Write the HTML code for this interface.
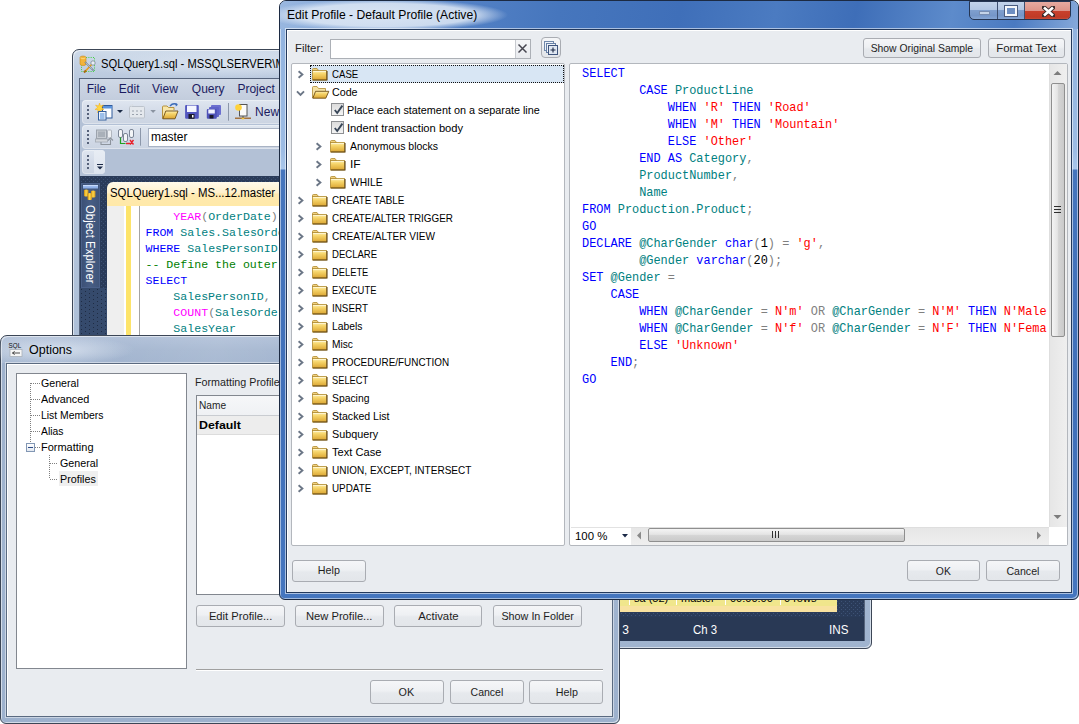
<!DOCTYPE html>
<html><head><meta charset="utf-8"><style>*{margin:0;padding:0;box-sizing:border-box}
html,body{width:1079px;height:724px;overflow:hidden;background:#fff;font-family:"Liberation Sans",sans-serif;font-size:11px;color:#000;position:relative}
.a{position:absolute}
.t{position:absolute;white-space:pre;transform-origin:0 0}
.btn{position:absolute;border:1px solid #a9acb2;border-radius:3px;background:linear-gradient(#f5f6f8,#eef0f3 45%,#e6e9ed 55%,#e3e6ea)}
.kw{color:#0000ff}.id{color:#008080}.st{color:#ff0000}.gr{color:#808080}.fn{color:#ff00ff}.cm{color:#008000}
</style></head><body>
<svg width="0" height="0" style="position:absolute"><defs><linearGradient id="fg" x1="0" y1="0" x2="0" y2="1"><stop offset="0" stop-color="#fdf0b8"/><stop offset="0.35" stop-color="#f6d56a"/><stop offset="1" stop-color="#dba532"/></linearGradient></defs></svg>
<div class="a" style="left:72px;top:49px;width:800px;height:600px;border:1px solid #3c4656;border-radius:7px 7px 6px 6px;box-shadow:inset 1px 1px 0 rgba(255,255,255,.55),inset -1px -1px 0 rgba(255,255,255,.55);background:linear-gradient(#cfdbea,#c2d0e3 14px,#bac9de 29px,#aabdd6 60%,#a0b4cf)"></div>
<div class="a" style="left:73px;top:50px;width:327px;height:28px;background:radial-gradient(ellipse 150px 14px at 150px 14px,rgba(230,237,246,.7),rgba(230,237,246,0))"></div>
<svg class="a" style="left:0;top:0" width="100" height="80"><rect x="81.5" y="57.5" width="13" height="14" fill="none" stroke="#3fd03f" stroke-width="1" stroke-dasharray="1,1.3"/><path d="M80 57.5 Q80 56 83 56 Q86 56 86 57.5 V64 Q86 65.5 83 65.5 Q80 65.5 80 64z" fill="#f2b43a" stroke="#c98a1a" stroke-width=".6"/><path d="M80.5 58 Q83 59.5 85.5 58" fill="none" stroke="#ffe08a" stroke-width=".8"/><path d="M85 71.5 L93 63" stroke="#e8a020" stroke-width="1.8"/><path d="M84 72.5 L86 70.5" stroke="#a86a10" stroke-width="2"/><path d="M85 62 L93.5 70.5" stroke="#6c7c8c" stroke-width="1.6"/><path d="M85.5 62.5 L92.5 69.5" stroke="#dfe8f0" stroke-width=".6"/><circle cx="93" cy="63" r="2.2" fill="#e8eef4" stroke="#7a8694" stroke-width=".8"/></svg>
<div class="t" style="left:100.74px;top:57.52px;font-size:12px;line-height:12px;color:#000;font-weight:normal;font-family:'Liberation Sans';transform:scaleX(0.9320);">SQLQuery1.sql - MSSQLSERVER\MSSQLSERVER2012.master</div>
<div class="a" style="left:0;top:0;width:1079px;height:724px;clip-path:inset(78px 214px 83px 79px)">
<div class="a" style="left:79px;top:78px;width:786px;height:564px;background:#b3c1d6;border:1px solid #56647c"></div>
<div class="a" style="left:80px;top:79px;width:784px;height:21px;background:linear-gradient(#cfd8e6,#c3cddd)"></div>
<div class="t" style="left:86.70px;top:83.12px;font-size:12px;line-height:12px;color:#1b1b60;font-weight:normal;font-family:'Liberation Sans';transform:scaleX(1.0000);">File</div>
<div class="t" style="left:118.80px;top:83.12px;font-size:12px;line-height:12px;color:#1b1b60;font-weight:normal;font-family:'Liberation Sans';transform:scaleX(1.0000);">Edit</div>
<div class="t" style="left:152.00px;top:83.12px;font-size:12px;line-height:12px;color:#1b1b60;font-weight:normal;font-family:'Liberation Sans';transform:scaleX(1.0000);">View</div>
<div class="t" style="left:191.80px;top:83.12px;font-size:12px;line-height:12px;color:#1b1b60;font-weight:normal;font-family:'Liberation Sans';transform:scaleX(1.0000);">Query</div>
<div class="t" style="left:237.40px;top:83.12px;font-size:12px;line-height:12px;color:#1b1b60;font-weight:normal;font-family:'Liberation Sans';transform:scaleX(1.0000);">Project</div>
<div class="a" style="left:82.2px;top:100.3px;width:817.8px;height:23.5px;border-radius:4px;background:linear-gradient(#dfe6f0,#d3dbe8 50%,#cbd4e2);box-shadow:inset 0 0 0 1px rgba(255,255,255,.35)"></div>
<div class="a" style="left:82.2px;top:125.2px;width:817.8px;height:23.5px;border-radius:4px;background:linear-gradient(#dfe6f0,#d3dbe8 50%,#cbd4e2);box-shadow:inset 0 0 0 1px rgba(255,255,255,.35)"></div>
<div class="a" style="left:82.2px;top:150.2px;width:22.6px;height:24px;border-radius:4px;background:linear-gradient(#dfe6f0,#d3dbe8 50%,#cbd4e2);box-shadow:inset 0 0 0 1px rgba(255,255,255,.35)"></div>
<div class="a" style="left:94.4px;top:150.2px;width:10.4px;height:24px;border-radius:0 4px 4px 0;background:linear-gradient(#e8edf4,#dde4ee)"></div>
<div class="a" style="left:87px;top:105px;width:2px;height:15px;background-image:linear-gradient(#56627a 0 2px,transparent 2px);background-size:2px 4px"></div>
<div class="a" style="left:87px;top:130px;width:2px;height:15px;background-image:linear-gradient(#56627a 0 2px,transparent 2px);background-size:2px 4px"></div>
<div class="a" style="left:87px;top:155px;width:2px;height:15px;background-image:linear-gradient(#56627a 0 2px,transparent 2px);background-size:2px 4px"></div>
<svg class="a" style="left:0;top:0" width="300" height="180">
  <rect x="102.5" y="105.5" width="9.5" height="12.5" fill="#fbfdff" stroke="#2f5a9c"/>
  <rect x="103" y="106" width="9" height="2.5" fill="#5b93dc"/>
  <path d="M99.5 103 l1 3 3 -1 -2 2.5 2.5 2 -3 .2 .5 3 -2 -2.2 -2 2.2 .5 -3 -3 -.2 2.5 -2 -2 -2.5 3 1z" fill="#ffd640" stroke="#f0a000" stroke-width=".4"/>
  <rect x="98.5" y="111.5" width="7.5" height="8.5" fill="#eef4fc" stroke="#35609e"/>
  <path d="M100 114 h4.5 M100 116 h4.5 M100 118 h4.5" stroke="#4a8ad8" stroke-width="1"/>
  <path d="M117 110 h6 l-3 3z" fill="#1b2a46"/>
  <rect x="129.5" y="106.5" width="15" height="11.5" rx="1" fill="#e4e8ed" stroke="#bcc3cc"/>
  <path d="M132 111 h2 M136 111 h2 M140 111 h2 M132 114.5 h2 M136 114.5 h2 M140 114.5 h2" stroke="#9aa2ad" stroke-width="1.2"/>
  <path d="M132 104 l1 2 M130 105 l2 1.5" stroke="#d8dde3" stroke-width="1"/>
  <path d="M150.3 110 h5.6 l-2.8 3z" fill="#8a93a0"/>
  <path d="M162.5 118.5 V107 Q162.5 106 163.5 106 H167 L168.5 107.5 H174 V110" fill="#f8e6a8" stroke="#b08a30" stroke-width=".9"/>
  <path d="M162.8 118.8 L165.8 111 H178 L175 118.8 Z" fill="url(#fg)" stroke="#6e4e14" stroke-width=".9"/>
  <path d="M170 106 Q173 102.5 177 104.5" fill="none" stroke="#3a6ab8" stroke-width="1.4"/><path d="M175.5 103 l2.5 1.8 -2.2 1.6z" fill="#3a6ab8"/>
  <rect x="185.1" y="105.1" width="13.7" height="13.7" rx="1" fill="#5357c0"/>
  <rect x="187" y="105.6" width="9.5" height="6.4" fill="#f4f6ff"/>
  <rect x="188.5" y="114" width="6" height="4.8" fill="#1a1a2a"/><rect x="192" y="115" width="1.5" height="2.5" fill="#fff"/>
  <rect x="211" y="105" width="10" height="10" rx="1" fill="#6b6fd0"/>
  <rect x="209" y="107" width="10" height="10" rx="1" fill="#5e62c8"/>
  <rect x="206.8" y="109" width="10" height="9.8" rx="1" fill="#4e52b8"/>
  <rect x="208.3" y="109.5" width="6.5" height="4" fill="#f0f2ff"/><rect x="209.5" y="115" width="4" height="3.5" fill="#1a1a2a"/>
  <rect x="228" y="103" width="1" height="17.7" fill="#8c97aa"/>
  <rect x="239.5" y="104.5" width="7.5" height="11.5" fill="#fbfbfb" stroke="#555"/>
  <circle cx="238.5" cy="107.5" r="3.3" fill="#ffd23a"/>
  <path d="M235 118.2 h16" stroke="#9a5a18" stroke-width="1.2"/><circle cx="243" cy="118.2" r="1.2" fill="#f5c542"/><path d="M243 116 v2" stroke="#555"/>
  <rect x="96.5" y="130" width="10" height="8.5" fill="#c7ccd3" stroke="#9ca3ad"/><rect x="98" y="131.5" width="7" height="5.5" fill="#a9b0b9"/>
  <rect x="95.5" y="139" width="12" height="3" fill="#d2d6dc" stroke="#a4aab3" stroke-width=".8"/>
  <rect x="107.5" y="130" width="4" height="8" rx="1" fill="#eceff3" stroke="#a4aab3" stroke-width=".8"/>
  <path d="M101 142 v2.5 h9.5 v-5" fill="none" stroke="#8d949d" stroke-width="1.1"/><path d="M108 140.5 l2.5 -2.5 2.5 2.5" fill="none" stroke="#8d949d" stroke-width="1.1"/>
  <rect x="118.5" y="129.5" width="4" height="8" rx="1.5" fill="#f4f6f8" stroke="#6f7b8c" stroke-width=".9"/>
  <rect x="123.5" y="133.5" width="4" height="8" rx="1.5" fill="#f4f6f8" stroke="#6f7b8c" stroke-width=".9"/>
  <rect x="129.5" y="129.5" width="4" height="8" rx="1.5" fill="#f4f6f8" stroke="#6f7b8c" stroke-width=".9"/>
  <path d="M120.5 137.5 v6 h5" fill="none" stroke="#21a021" stroke-width="1.2"/>
  <path d="M130 140 l3.5 4.5 M133.5 140 l-3.5 4.5 M126 143.5 h4" stroke="#e8202a" stroke-width="1.4"/>
  <rect x="140" y="128" width="1" height="17.7" fill="#8c97aa"/>
  <rect x="97" y="164" width="6" height="1" fill="#1b2a46"/><path d="M97 166.5 h6 l-3 3z" fill="#1b2a46"/>
</svg>
<div class="t" style="left:255.10px;top:105.72px;font-size:12px;line-height:12px;color:#1b1b60;font-weight:normal;font-family:'Liberation Sans';transform:scaleX(1.0000);">New Query</div>
<div class="a" style="left:147.6px;top:127.5px;width:752.4px;height:19.2px;background:#fff;border:1px solid #a9b3c4"></div>
<div class="t" style="left:151.00px;top:131.42px;font-size:12px;line-height:12px;color:#000;font-weight:normal;font-family:'Liberation Sans';transform:scaleX(0.9947);">master</div>
<svg class="a" style="left:80px;top:176px" width="784" height="465"><defs><pattern id="dk1" width="4" height="4" patternUnits="userSpaceOnUse"><rect width="4" height="4" fill="#2a3b59"/><rect x="1" y="1" width="1" height="1" fill="#3d5275"/><rect x="3" y="3" width="1" height="1" fill="#3d5275"/></pattern><pattern id="dk2" width="8" height="4" patternUnits="userSpaceOnUse"><rect width="8" height="4" fill="#354a6c"/><rect x="1" y="1" width="1" height="1" fill="#1f2c44"/><rect x="5" y="3" width="1" height="1" fill="#1f2c44"/></pattern></defs><rect width="784" height="465" fill="url(#dk1)"/><rect x="0" y="112" width="27" height="297" fill="url(#dk2)"/></svg>
<div class="a" style="left:80.5px;top:183px;width:19px;height:105px;background:linear-gradient(90deg,#3c5177,#475d84 50%,#3f5479);border:1px solid #4a6089"></div>
<svg class="a" style="left:0;top:0" width="110" height="210"><defs><linearGradient id="cyl" x1="0" x2="1"><stop offset="0" stop-color="#c98a10"/><stop offset=".45" stop-color="#ffd84a"/><stop offset="1" stop-color="#d49a20"/></linearGradient></defs><rect x="83" y="185" width="15" height="3.5" fill="#8fb0e8"/><rect x="83" y="185" width="15" height="1.2" fill="#c6dafc"/><path d="M84 190 q2.2 -1.2 4.4 0 v6 q-2.2 1.2 -4.4 0z" fill="url(#cyl)"/><path d="M91 191 q2.2 -1.2 4.4 0 v6 q-2.2 1.2 -4.4 0z" fill="url(#cyl)"/><path d="M87.5 193.5 q2.2 -1.2 4.4 0 v6 q-2.2 1.2 -4.4 0z" fill="url(#cyl)"/></svg>
<div class="t" style="left:95.5px;top:205px;font-size:12px;line-height:12px;color:#fff;transform:rotate(90deg) scaleX(0.95)">Object Explorer</div>
<div class="a" style="left:107px;top:182px;width:757px;height:24px;border-radius:6px 0 0 0;background:linear-gradient(#fffaea,#fff1cc 45%,#ffe9b0 50%,#ffe9a8)"></div>
<div class="t" style="left:110.43px;top:187.22px;font-size:12px;line-height:12px;color:#000;font-weight:normal;font-family:'Liberation Sans';transform:scaleX(0.9487);">SQLQuery1.sql - MS...12.master</div>
<div class="a" style="left:107px;top:206px;width:730px;height:379px;background:#fff"></div>
<div class="a" style="left:107px;top:206px;width:17px;height:379px;background:#efefef"></div>
<div class="a" style="left:126px;top:206px;width:5px;height:379px;background:#fde46a"></div>
<div class="a" style="left:138.5px;top:206px;width:1px;height:379px;background:#a5a5a5"></div>
<div class="a" style="left:145.5px;top:208.5px;font-family:'Liberation Mono';font-size:11.6px;line-height:16px;white-space:pre"><span class="fn">    YEAR</span><span class="gr">(</span><span class="id">OrderDate</span><span class="gr">)</span> <span class="kw">AS</span> <span class="id">SalesYear</span>
<span class="kw">FROM</span> <span class="id">Sales.SalesOrderHeader</span>
<span class="kw">WHERE</span> <span class="id">SalesPersonID</span> <span class="gr">IS NOT NULL</span><span class="gr">)</span>
<span class="cm">-- Define the outer query.</span>
<span class="kw">SELECT</span>
<span class="id">    SalesPersonID</span><span class="gr">,</span>
<span class="fn">    COUNT</span><span class="gr">(</span><span class="id">SalesOrderID</span><span class="gr">)</span> <span class="kw">AS</span>
<span class="id">    SalesYear</span></div>
<div class="a" style="left:107px;top:585px;width:730px;height:27px;background:linear-gradient(#f0e68c 0,#f0e68c 79%,#f8e2a0 79%)"></div>
<div class="a" style="left:628.6px;top:590px;width:1px;height:15px;background:#fff"></div>
<div class="a" style="left:675.8px;top:590px;width:1px;height:15px;background:#fff"></div>
<div class="a" style="left:725px;top:590px;width:1px;height:15px;background:#fff"></div>
<div class="a" style="left:780px;top:590px;width:1px;height:15px;background:#fff"></div>
<div class="t" style="left:634px;top:592.5px;font-size:11px;line-height:11px;color:#000">sa (52)</div>
<div class="t" style="left:681px;top:592.5px;font-size:11px;line-height:11px;color:#000">master</div>
<div class="t" style="left:730px;top:592.5px;font-size:11px;line-height:11px;color:#000">00:00:00</div>
<div class="t" style="left:784px;top:592.5px;font-size:11px;line-height:11px;color:#000">0 rows</div>
<div class="a" style="left:80px;top:617px;width:784px;height:24px;background:#293955"></div>
<div class="t" style="left:622.20px;top:623.72px;font-size:12px;line-height:12px;color:#fff;font-weight:normal;font-family:'Liberation Sans';transform:scaleX(1.0000);">3</div>
<div class="t" style="left:693.43px;top:623.72px;font-size:12px;line-height:12px;color:#fff;font-weight:normal;font-family:'Liberation Sans';transform:scaleX(0.9520);">Ch 3</div>
<div class="t" style="left:829.12px;top:623.72px;font-size:12px;line-height:12px;color:#fff;font-weight:normal;font-family:'Liberation Sans';transform:scaleX(0.9726);">INS</div>
</div>
<div class="a" style="left:0px;top:335px;width:620px;height:389px;border:1px solid #3c4656;border-radius:7px 7px 6px 6px;box-shadow:inset 1px 1px 0 rgba(255,255,255,.55),inset -1px -1px 0 rgba(255,255,255,.55);background:linear-gradient(#b0c0d8,#a4b6d0 14px,#9fb2cd 29px,#a0b4cf 60%,#9db1cd)"></div>
<div class="a" style="left:1px;top:336px;width:618px;height:27px;border-radius:6px 6px 0 0;background:linear-gradient(100deg,rgba(255,255,255,.12) 0,rgba(255,255,255,.03) 20%,rgba(255,255,255,.1) 35%,rgba(255,255,255,0) 55%,rgba(255,255,255,.08) 80%,rgba(255,255,255,0) 100%)"></div>
<div class="a" style="left:0px;top:336px;width:180px;height:27px;background:radial-gradient(ellipse 80px 14px at 55px 14px,rgba(225,233,244,.8),rgba(225,233,244,0))"></div>
<svg class="a" style="left:0;top:330px" width="30" height="30"><text x="8.6" y="18.2" font-family="Liberation Sans" font-size="6.8" fill="#111" textLength="12.6" lengthAdjust="spacingAndGlyphs">SQL</text><rect x="10" y="19.5" width="12" height="7" fill="#f6f6f6" stroke="#a8b0b8" stroke-width=".8"/><path d="M12.5 23 h7.5 M12.5 23 l2.2 -1.6 M12.5 23 l2.2 1.6" stroke="#222" fill="none" stroke-width="0.8"/></svg>
<div class="t" style="left:28.88px;top:344.22px;font-size:12px;line-height:12px;color:#000;font-weight:normal;font-family:'Liberation Sans';transform:scaleX(1.0409);">Options</div>
<div class="a" style="left:6px;top:363px;width:607px;height:354px;background:#e9ecf0;border:1px solid #5a6a80;box-shadow:0 0 0 1px rgba(255,255,255,.45),inset 1px 1px 0 #fff"></div>
<div class="a" style="left:16px;top:373px;width:170.5px;height:295.5px;background:#fff;border:1px solid #82878f"></div>
<div class="a" style="left:30px;top:383px;width:1px;height:60px;background:repeating-linear-gradient(#7f7f7f 0 1px,transparent 1px 2px)"></div>
<div class="a" style="left:31px;top:383px;width:9px;height:1px;background:repeating-linear-gradient(90deg,#7f7f7f 0 1px,transparent 1px 2px)"></div>
<div class="a" style="left:31px;top:399px;width:9px;height:1px;background:repeating-linear-gradient(90deg,#7f7f7f 0 1px,transparent 1px 2px)"></div>
<div class="a" style="left:31px;top:415px;width:9px;height:1px;background:repeating-linear-gradient(90deg,#7f7f7f 0 1px,transparent 1px 2px)"></div>
<div class="a" style="left:31px;top:431px;width:9px;height:1px;background:repeating-linear-gradient(90deg,#7f7f7f 0 1px,transparent 1px 2px)"></div>
<div class="a" style="left:35px;top:447px;width:5px;height:1px;background:repeating-linear-gradient(90deg,#7f7f7f 0 1px,transparent 1px 2px)"></div>
<div class="a" style="left:26px;top:443px;width:9px;height:9px;border:1px solid #8297b4;background:linear-gradient(#fff,#e2e8f0)"></div>
<div class="a" style="left:28px;top:447px;width:5px;height:1px;background:#2c4a86"></div>
<div class="a" style="left:49px;top:455px;width:1px;height:24px;background:repeating-linear-gradient(#7f7f7f 0 1px,transparent 1px 2px)"></div>
<div class="a" style="left:50px;top:463px;width:8px;height:1px;background:repeating-linear-gradient(90deg,#7f7f7f 0 1px,transparent 1px 2px)"></div>
<div class="a" style="left:50px;top:479px;width:8px;height:1px;background:repeating-linear-gradient(90deg,#7f7f7f 0 1px,transparent 1px 2px)"></div>
<div class="a" style="left:59px;top:471px;width:39px;height:15px;background:#efefef"></div>
<div class="t" style="left:41.17px;top:377.50px;font-size:11px;line-height:11px;color:#000;font-weight:normal;font-family:'Liberation Sans';transform:scaleX(0.9648);">General</div>
<div class="t" style="left:41.16px;top:393.70px;font-size:11px;line-height:11px;color:#000;font-weight:normal;font-family:'Liberation Sans';transform:scaleX(0.9888);">Advanced</div>
<div class="t" style="left:41.18px;top:409.70px;font-size:11px;line-height:11px;color:#000;font-weight:normal;font-family:'Liberation Sans';transform:scaleX(0.9456);">List Members</div>
<div class="t" style="left:41.18px;top:425.70px;font-size:11px;line-height:11px;color:#000;font-weight:normal;font-family:'Liberation Sans';transform:scaleX(0.9409);">Alias</div>
<div class="t" style="left:41.15px;top:441.70px;font-size:11px;line-height:11px;color:#000;font-weight:normal;font-family:'Liberation Sans';transform:scaleX(0.9985);">Formatting</div>
<div class="t" style="left:59.77px;top:457.70px;font-size:11px;line-height:11px;color:#000;font-weight:normal;font-family:'Liberation Sans';transform:scaleX(0.9726);">General</div>
<div class="t" style="left:59.76px;top:473.70px;font-size:11px;line-height:11px;color:#000;font-weight:normal;font-family:'Liberation Sans';transform:scaleX(0.9751);">Profiles</div>
<div class="t" style="left:194.86px;top:376.70px;font-size:11px;line-height:11px;color:#1e1e1e;font-weight:normal;font-family:'Liberation Sans';transform:scaleX(0.9750);">Formatting Profiles</div>
<div class="a" style="left:196px;top:395px;width:404px;height:199.5px;background:#fff;border:1px solid #82878f"></div>
<div class="a" style="left:197px;top:396px;width:402px;height:19.5px;background:linear-gradient(#f6f7f9,#eff1f4);border-bottom:1px solid #c9ccd1"></div>
<div class="t" style="left:199.09px;top:399.70px;font-size:11px;line-height:11px;color:#1e1e1e;font-weight:normal;font-family:'Liberation Sans';transform:scaleX(0.9241);">Name</div>
<div class="a" style="left:197px;top:415.5px;width:402px;height:19px;background:#ededed;border-bottom:1px solid #dcdcdc"></div>
<div class="t" style="left:199.38px;top:419.76px;font-size:11.5px;line-height:11.5px;color:#000;font-weight:bold;font-family:'Liberation Sans';transform:scaleX(1.0731);">Default</div>
<div class="btn" style="left:196.4px;top:605.4px;width:88.4px;height:21.8px;"></div>
<div class="t" style="left:208.00px;top:611.26px;font-size:11.5px;line-height:11.5px;color:#1e1e1e;transform:scaleX(0.9726);transform-origin:50% 0">Edit Profile...</div>
<div class="btn" style="left:295.1px;top:605.4px;width:88.6px;height:21.8px;"></div>
<div class="t" style="left:305.20px;top:611.26px;font-size:11.5px;line-height:11.5px;color:#1e1e1e;transform:scaleX(0.9726);transform-origin:50% 0">New Profile...</div>
<div class="btn" style="left:394.3px;top:605.4px;width:88.1px;height:21.8px;"></div>
<div class="t" style="left:417.89px;top:611.26px;font-size:11.5px;line-height:11.5px;color:#1e1e1e;transform:scaleX(0.9881);transform-origin:50% 0">Activate</div>
<div class="btn" style="left:493.2px;top:605.4px;width:88.5px;height:21.8px;"></div>
<div class="t" style="left:498.77px;top:611.26px;font-size:11.5px;line-height:11.5px;color:#1e1e1e;transform:scaleX(0.9382);transform-origin:50% 0">Show In Folder</div>
<div class="a" style="left:196px;top:669px;width:407px;height:1px;background:#a0a0a0"></div>
<div class="a" style="left:196px;top:670px;width:407px;height:1px;background:#fff"></div>
<div class="btn" style="left:369.5px;top:680.4px;width:74px;height:24px;"></div>
<div class="t" style="left:398.19px;top:687.36px;font-size:11.5px;line-height:11.5px;color:#1e1e1e;transform:scaleX(0.9370);transform-origin:50% 0">OK</div>
<div class="btn" style="left:449.5px;top:680.4px;width:74px;height:24px;"></div>
<div class="t" style="left:468.59px;top:687.36px;font-size:11.5px;line-height:11.5px;color:#1e1e1e;transform:scaleX(0.9145);transform-origin:50% 0">Cancel</div>
<div class="btn" style="left:529.3px;top:680.4px;width:74.2px;height:24px;"></div>
<div class="t" style="left:554.57px;top:687.36px;font-size:11.5px;line-height:11.5px;color:#1e1e1e;transform:scaleX(0.9331);transform-origin:50% 0">Help</div>
<div class="a" style="left:279px;top:0px;width:800px;height:600px;border:1px solid #1c2a42;border-radius:7px 7px 6px 6px;box-shadow:inset 1px 1px 0 rgba(255,255,255,.5),inset -1px -1px 0 rgba(255,255,255,.5);background:linear-gradient(#8fb1de 0,#9dbce4 150px,#a9c6ea 168px,#4575bd 169px,#3f6fb9 400px,#4576bf 600px)"></div>
<div class="a" style="left:280px;top:1px;width:798px;height:28px;border-radius:6px 6px 0 0;background:linear-gradient(100deg,#9ab8e0 0,#7fa3d6 10%,#5482c6 22%,#4676bd 35%,#3f6fb9 50%,#4b7bc1 62%,#3e6eb8 72%,#5d8bcb 84%,#4a7ac1 92%,#86a9da 100%)"></div>
<div class="a" style="left:280px;top:1px;width:260px;height:28px;background:radial-gradient(ellipse 122px 16px at 106px 14px,rgba(222,232,245,.95) 0,rgba(222,232,245,.85) 72%,rgba(222,232,245,0) 100%)"></div>
<div class="t" style="left:286.79px;top:8.52px;font-size:12px;line-height:12px;color:#000;font-weight:normal;font-family:'Liberation Sans';transform:scaleX(1.0114);">Edit Profile - Default Profile (Active)</div>
<div class="a" style="left:969.4px;top:0.5px;width:102px;height:19px;border:1px solid #253552;border-top:1px solid #253552;border-radius:0 0 5px 5px;overflow:hidden;background:linear-gradient(#c3d3ea,#b3c7e3 45%,#7f9fce 50%,#7596c8 80%,#86a6d4)">
    <div class="a" style="left:27px;top:0;width:1px;height:19px;background:#3d4f70"></div>
    <div class="a" style="left:54px;top:0;width:47px;height:19px;background:linear-gradient(#e6aaa0,#dd9489 45%,#c8402c 50%,#bf3a26 80%,#d0604a)"></div>
    <div class="a" style="left:54px;top:0;width:1px;height:19px;background:#3d4f70"></div>
    <div class="a" style="left:8.5px;top:9.5px;width:11px;height:4px;background:#c4d3e8;border:1px solid rgba(70,95,140,.6)"></div>
    <div class="a" style="left:35px;top:4px;width:12px;height:10px;border:2.5px solid #f6f8fb;outline:1px solid #4a5c80;background:#6e8fc2"></div>
    <svg class="a" style="left:72px;top:4px" width="13" height="11"><path d="M2 1.5 L11 9.5 M11 1.5 L2 9.5" stroke="#3a2a2a" stroke-width="4.4" stroke-linecap="square"/><path d="M2 1.5 L11 9.5 M11 1.5 L2 9.5" stroke="#fff" stroke-width="2.6"/></svg>
  </div>
<div class="a" style="left:285.5px;top:28.5px;width:786.5px;height:564px;background:#e9ecf0;border:1px solid #23395c;box-shadow:0 0 0 1px rgba(255,255,255,.55),inset 1px 1px 0 #fff"></div>
<div class="t" style="left:295.03px;top:43.30px;font-size:11px;line-height:11px;color:#1e1e1e;font-weight:normal;font-family:'Liberation Sans';transform:scaleX(1.0303);">Filter:</div>
<div class="a" style="left:330px;top:39px;width:201px;height:19.5px;background:#fff;border:1px solid #acb0b6"></div>
<div class="a" style="left:514.5px;top:40px;width:15.5px;height:17.5px;background:linear-gradient(#f5f6f8,#e8eaee);border-left:1px solid #c7cacf"></div>
<svg class="a" style="left:517px;top:43px" width="11" height="11"><path d="M1.5 1.5 L9.5 9.5 M9.5 1.5 L1.5 9.5" stroke="#45454f" stroke-width="1.5"/></svg>
<div class="btn" style="left:540.5px;top:37.2px;width:20.9px;height:21.1px;border-radius:4px"></div>
<svg class="a" style="left:543px;top:40px" width="17" height="16"><rect x="1.5" y="1.5" width="9" height="9" fill="#eef2f8" stroke="#7189ab"/><rect x="3.5" y="3.5" width="9" height="9" fill="#eef2f8" stroke="#6680a6"/><rect x="5.5" y="5.5" width="9" height="9" fill="#dfe7f2" stroke="#3f557d"/><path d="M10 7.5 v5 M7.5 10 h5" stroke="#1a2744" stroke-width="1.1"/></svg>
<div class="btn" style="left:862.5px;top:37.6px;width:118.9px;height:20.9px;"></div>
<div class="t" style="left:865.06px;top:43.01px;font-size:11.5px;line-height:11.5px;color:#1e1e1e;transform:scaleX(0.9003);transform-origin:50% 0">Show Original Sample</div>
<div class="btn" style="left:988.4px;top:37.6px;width:76.6px;height:20.9px;"></div>
<div class="t" style="left:996.45px;top:43.01px;font-size:11.5px;line-height:11.5px;color:#1e1e1e;transform:scaleX(0.9941);transform-origin:50% 0">Format Text</div>
<div class="a" style="left:290.5px;top:63px;width:274px;height:483px;background:#fff;border:1px solid #b3b7bd;border-radius:2px"></div>
<div class="a" style="left:569px;top:63px;width:498.5px;height:483px;background:#fff;border:1px solid #b3b7bd;border-radius:2px"></div>
<div class="a" style="left:310px;top:65px;width:254px;height:17.5px;background:#d8e6f4;outline:1px dotted #111;outline-offset:-1px"></div>
<svg class="a" style="left:296.5px;top:69.5px" width="8" height="9"><path d="M1.6 1.2 L5.4 4.5 L1.6 7.8" fill="none" stroke="#6b7686" stroke-width="1.9"/></svg>
<svg class="a" style="left:312px;top:68px" width="16" height="13"><path d="M0.5 2.5 V1.5 Q0.5 0.5 1.5 0.5 H5 L6.5 2.5 Z" fill="#f2d27e" stroke="#b08a30" stroke-width=".8"/><rect x="0.5" y="2.5" width="14" height="9.5" fill="url(#fg)" stroke="#b08a30" stroke-width=".8"/><path d="M1 12 H15 V3" fill="none" stroke="#5e4210" stroke-width="1.1"/><path d="M1.2 3.5 H14" stroke="#fff8d8" stroke-width=".8"/></svg>
<div class="t" style="left:332.12px;top:68.70px;font-size:11px;line-height:11px;color:#000;font-weight:normal;font-family:'Liberation Sans';transform:scaleX(0.8764);">CASE</div>
<svg class="a" style="left:296px;top:89.5px" width="9" height="7"><path d="M1 1.4 L4.5 5 L8 1.4" fill="none" stroke="#6b7686" stroke-width="1.9"/></svg>
<svg class="a" style="left:312px;top:86px" width="18" height="13"><path d="M0.5 12 V1.5 Q0.5 0.5 1.5 0.5 H5 L6.5 2.5 H13.5 V5" fill="#f6e3a4" stroke="#b08a30" stroke-width=".8"/><path d="M0.8 12.2 L3.6 5.3 H16.8 L13.8 12.2 Z" fill="url(#fg)" stroke="#6e4e14" stroke-width=".9"/></svg>
<div class="t" style="left:332.07px;top:86.70px;font-size:11px;line-height:11px;color:#000;font-weight:normal;font-family:'Liberation Sans';transform:scaleX(0.9723);">Code</div>
<div class="a" style="left:331px;top:102.5px;width:13px;height:13px;border:1px solid #8e9093;background:linear-gradient(#dcdcdc,#f4f4f4)"><svg style="position:absolute;left:1px;top:0px" width="11" height="11"><path d="M1.8 6 L4.2 9 L9.4 1.6" fill="none" stroke="#384658" stroke-width="1.9"/></svg></div>
<div class="t" style="left:346.86px;top:104.70px;font-size:11px;line-height:11px;color:#000;font-weight:normal;font-family:'Liberation Sans';transform:scaleX(0.9821);">Place each statement on a separate line</div>
<div class="a" style="left:331px;top:120.5px;width:13px;height:13px;border:1px solid #8e9093;background:linear-gradient(#dcdcdc,#f4f4f4)"><svg style="position:absolute;left:1px;top:0px" width="11" height="11"><path d="M1.8 6 L4.2 9 L9.4 1.6" fill="none" stroke="#384658" stroke-width="1.9"/></svg></div>
<div class="t" style="left:346.84px;top:122.70px;font-size:11px;line-height:11px;color:#000;font-weight:normal;font-family:'Liberation Sans';transform:scaleX(1.0154);">Indent transaction body</div>
<svg class="a" style="left:314.5px;top:141.5px" width="8" height="9"><path d="M1.6 1.2 L5.4 4.5 L1.6 7.8" fill="none" stroke="#6b7686" stroke-width="1.9"/></svg>
<svg class="a" style="left:330px;top:140px" width="16" height="13"><path d="M0.5 2.5 V1.5 Q0.5 0.5 1.5 0.5 H5 L6.5 2.5 Z" fill="#f2d27e" stroke="#b08a30" stroke-width=".8"/><rect x="0.5" y="2.5" width="14" height="9.5" fill="url(#fg)" stroke="#b08a30" stroke-width=".8"/><path d="M1 12 H15 V3" fill="none" stroke="#5e4210" stroke-width="1.1"/><path d="M1.2 3.5 H14" stroke="#fff8d8" stroke-width=".8"/></svg>
<div class="t" style="left:350.08px;top:140.70px;font-size:11px;line-height:11px;color:#000;font-weight:normal;font-family:'Liberation Sans';transform:scaleX(0.9537);">Anonymous blocks</div>
<svg class="a" style="left:314.5px;top:159.5px" width="8" height="9"><path d="M1.6 1.2 L5.4 4.5 L1.6 7.8" fill="none" stroke="#6b7686" stroke-width="1.9"/></svg>
<svg class="a" style="left:330px;top:158px" width="16" height="13"><path d="M0.5 2.5 V1.5 Q0.5 0.5 1.5 0.5 H5 L6.5 2.5 Z" fill="#f2d27e" stroke="#b08a30" stroke-width=".8"/><rect x="0.5" y="2.5" width="14" height="9.5" fill="url(#fg)" stroke="#b08a30" stroke-width=".8"/><path d="M1 12 H15 V3" fill="none" stroke="#5e4210" stroke-width="1.1"/><path d="M1.2 3.5 H14" stroke="#fff8d8" stroke-width=".8"/></svg>
<div class="t" style="left:350.00px;top:158.70px;font-size:11px;line-height:11px;color:#000;font-weight:normal;font-family:'Liberation Sans';transform:scaleX(1.0828);">IF</div>
<svg class="a" style="left:314.5px;top:177.5px" width="8" height="9"><path d="M1.6 1.2 L5.4 4.5 L1.6 7.8" fill="none" stroke="#6b7686" stroke-width="1.9"/></svg>
<svg class="a" style="left:330px;top:176px" width="16" height="13"><path d="M0.5 2.5 V1.5 Q0.5 0.5 1.5 0.5 H5 L6.5 2.5 Z" fill="#f2d27e" stroke="#b08a30" stroke-width=".8"/><rect x="0.5" y="2.5" width="14" height="9.5" fill="url(#fg)" stroke="#b08a30" stroke-width=".8"/><path d="M1 12 H15 V3" fill="none" stroke="#5e4210" stroke-width="1.1"/><path d="M1.2 3.5 H14" stroke="#fff8d8" stroke-width=".8"/></svg>
<div class="t" style="left:350.09px;top:176.70px;font-size:11px;line-height:11px;color:#000;font-weight:normal;font-family:'Liberation Sans';transform:scaleX(0.9335);">WHILE</div>
<svg class="a" style="left:296.5px;top:195.5px" width="8" height="9"><path d="M1.6 1.2 L5.4 4.5 L1.6 7.8" fill="none" stroke="#6b7686" stroke-width="1.9"/></svg>
<svg class="a" style="left:312px;top:194px" width="16" height="13"><path d="M0.5 2.5 V1.5 Q0.5 0.5 1.5 0.5 H5 L6.5 2.5 Z" fill="#f2d27e" stroke="#b08a30" stroke-width=".8"/><rect x="0.5" y="2.5" width="14" height="9.5" fill="url(#fg)" stroke="#b08a30" stroke-width=".8"/><path d="M1 12 H15 V3" fill="none" stroke="#5e4210" stroke-width="1.1"/><path d="M1.2 3.5 H14" stroke="#fff8d8" stroke-width=".8"/></svg>
<div class="t" style="left:332.11px;top:194.70px;font-size:11px;line-height:11px;color:#000;font-weight:normal;font-family:'Liberation Sans';transform:scaleX(0.8969);">CREATE TABLE</div>
<svg class="a" style="left:296.5px;top:213.5px" width="8" height="9"><path d="M1.6 1.2 L5.4 4.5 L1.6 7.8" fill="none" stroke="#6b7686" stroke-width="1.9"/></svg>
<svg class="a" style="left:312px;top:212px" width="16" height="13"><path d="M0.5 2.5 V1.5 Q0.5 0.5 1.5 0.5 H5 L6.5 2.5 Z" fill="#f2d27e" stroke="#b08a30" stroke-width=".8"/><rect x="0.5" y="2.5" width="14" height="9.5" fill="url(#fg)" stroke="#b08a30" stroke-width=".8"/><path d="M1 12 H15 V3" fill="none" stroke="#5e4210" stroke-width="1.1"/><path d="M1.2 3.5 H14" stroke="#fff8d8" stroke-width=".8"/></svg>
<div class="t" style="left:332.11px;top:212.70px;font-size:11px;line-height:11px;color:#000;font-weight:normal;font-family:'Liberation Sans';transform:scaleX(0.8998);">CREATE/ALTER TRIGGER</div>
<svg class="a" style="left:296.5px;top:231.5px" width="8" height="9"><path d="M1.6 1.2 L5.4 4.5 L1.6 7.8" fill="none" stroke="#6b7686" stroke-width="1.9"/></svg>
<svg class="a" style="left:312px;top:230px" width="16" height="13"><path d="M0.5 2.5 V1.5 Q0.5 0.5 1.5 0.5 H5 L6.5 2.5 Z" fill="#f2d27e" stroke="#b08a30" stroke-width=".8"/><rect x="0.5" y="2.5" width="14" height="9.5" fill="url(#fg)" stroke="#b08a30" stroke-width=".8"/><path d="M1 12 H15 V3" fill="none" stroke="#5e4210" stroke-width="1.1"/><path d="M1.2 3.5 H14" stroke="#fff8d8" stroke-width=".8"/></svg>
<div class="t" style="left:332.10px;top:230.70px;font-size:11px;line-height:11px;color:#000;font-weight:normal;font-family:'Liberation Sans';transform:scaleX(0.9142);">CREATE/ALTER VIEW</div>
<svg class="a" style="left:296.5px;top:249.5px" width="8" height="9"><path d="M1.6 1.2 L5.4 4.5 L1.6 7.8" fill="none" stroke="#6b7686" stroke-width="1.9"/></svg>
<svg class="a" style="left:312px;top:248px" width="16" height="13"><path d="M0.5 2.5 V1.5 Q0.5 0.5 1.5 0.5 H5 L6.5 2.5 Z" fill="#f2d27e" stroke="#b08a30" stroke-width=".8"/><rect x="0.5" y="2.5" width="14" height="9.5" fill="url(#fg)" stroke="#b08a30" stroke-width=".8"/><path d="M1 12 H15 V3" fill="none" stroke="#5e4210" stroke-width="1.1"/><path d="M1.2 3.5 H14" stroke="#fff8d8" stroke-width=".8"/></svg>
<div class="t" style="left:332.12px;top:248.70px;font-size:11px;line-height:11px;color:#000;font-weight:normal;font-family:'Liberation Sans';transform:scaleX(0.8689);">DECLARE</div>
<svg class="a" style="left:296.5px;top:267.5px" width="8" height="9"><path d="M1.6 1.2 L5.4 4.5 L1.6 7.8" fill="none" stroke="#6b7686" stroke-width="1.9"/></svg>
<svg class="a" style="left:312px;top:266px" width="16" height="13"><path d="M0.5 2.5 V1.5 Q0.5 0.5 1.5 0.5 H5 L6.5 2.5 Z" fill="#f2d27e" stroke="#b08a30" stroke-width=".8"/><rect x="0.5" y="2.5" width="14" height="9.5" fill="url(#fg)" stroke="#b08a30" stroke-width=".8"/><path d="M1 12 H15 V3" fill="none" stroke="#5e4210" stroke-width="1.1"/><path d="M1.2 3.5 H14" stroke="#fff8d8" stroke-width=".8"/></svg>
<div class="t" style="left:332.13px;top:266.70px;font-size:11px;line-height:11px;color:#000;font-weight:normal;font-family:'Liberation Sans';transform:scaleX(0.8490);">DELETE</div>
<svg class="a" style="left:296.5px;top:285.5px" width="8" height="9"><path d="M1.6 1.2 L5.4 4.5 L1.6 7.8" fill="none" stroke="#6b7686" stroke-width="1.9"/></svg>
<svg class="a" style="left:312px;top:284px" width="16" height="13"><path d="M0.5 2.5 V1.5 Q0.5 0.5 1.5 0.5 H5 L6.5 2.5 Z" fill="#f2d27e" stroke="#b08a30" stroke-width=".8"/><rect x="0.5" y="2.5" width="14" height="9.5" fill="url(#fg)" stroke="#b08a30" stroke-width=".8"/><path d="M1 12 H15 V3" fill="none" stroke="#5e4210" stroke-width="1.1"/><path d="M1.2 3.5 H14" stroke="#fff8d8" stroke-width=".8"/></svg>
<div class="t" style="left:332.13px;top:284.70px;font-size:11px;line-height:11px;color:#000;font-weight:normal;font-family:'Liberation Sans';transform:scaleX(0.8551);">EXECUTE</div>
<svg class="a" style="left:296.5px;top:303.5px" width="8" height="9"><path d="M1.6 1.2 L5.4 4.5 L1.6 7.8" fill="none" stroke="#6b7686" stroke-width="1.9"/></svg>
<svg class="a" style="left:312px;top:302px" width="16" height="13"><path d="M0.5 2.5 V1.5 Q0.5 0.5 1.5 0.5 H5 L6.5 2.5 Z" fill="#f2d27e" stroke="#b08a30" stroke-width=".8"/><rect x="0.5" y="2.5" width="14" height="9.5" fill="url(#fg)" stroke="#b08a30" stroke-width=".8"/><path d="M1 12 H15 V3" fill="none" stroke="#5e4210" stroke-width="1.1"/><path d="M1.2 3.5 H14" stroke="#fff8d8" stroke-width=".8"/></svg>
<div class="t" style="left:332.11px;top:302.70px;font-size:11px;line-height:11px;color:#000;font-weight:normal;font-family:'Liberation Sans';transform:scaleX(0.8965);">INSERT</div>
<svg class="a" style="left:296.5px;top:321.5px" width="8" height="9"><path d="M1.6 1.2 L5.4 4.5 L1.6 7.8" fill="none" stroke="#6b7686" stroke-width="1.9"/></svg>
<svg class="a" style="left:312px;top:320px" width="16" height="13"><path d="M0.5 2.5 V1.5 Q0.5 0.5 1.5 0.5 H5 L6.5 2.5 Z" fill="#f2d27e" stroke="#b08a30" stroke-width=".8"/><rect x="0.5" y="2.5" width="14" height="9.5" fill="url(#fg)" stroke="#b08a30" stroke-width=".8"/><path d="M1 12 H15 V3" fill="none" stroke="#5e4210" stroke-width="1.1"/><path d="M1.2 3.5 H14" stroke="#fff8d8" stroke-width=".8"/></svg>
<div class="t" style="left:332.08px;top:320.70px;font-size:11px;line-height:11px;color:#000;font-weight:normal;font-family:'Liberation Sans';transform:scaleX(0.9386);">Labels</div>
<svg class="a" style="left:296.5px;top:339.5px" width="8" height="9"><path d="M1.6 1.2 L5.4 4.5 L1.6 7.8" fill="none" stroke="#6b7686" stroke-width="1.9"/></svg>
<svg class="a" style="left:312px;top:338px" width="16" height="13"><path d="M0.5 2.5 V1.5 Q0.5 0.5 1.5 0.5 H5 L6.5 2.5 Z" fill="#f2d27e" stroke="#b08a30" stroke-width=".8"/><rect x="0.5" y="2.5" width="14" height="9.5" fill="url(#fg)" stroke="#b08a30" stroke-width=".8"/><path d="M1 12 H15 V3" fill="none" stroke="#5e4210" stroke-width="1.1"/><path d="M1.2 3.5 H14" stroke="#fff8d8" stroke-width=".8"/></svg>
<div class="t" style="left:332.09px;top:338.70px;font-size:11px;line-height:11px;color:#000;font-weight:normal;font-family:'Liberation Sans';transform:scaleX(0.9252);">Misc</div>
<svg class="a" style="left:296.5px;top:357.5px" width="8" height="9"><path d="M1.6 1.2 L5.4 4.5 L1.6 7.8" fill="none" stroke="#6b7686" stroke-width="1.9"/></svg>
<svg class="a" style="left:312px;top:356px" width="16" height="13"><path d="M0.5 2.5 V1.5 Q0.5 0.5 1.5 0.5 H5 L6.5 2.5 Z" fill="#f2d27e" stroke="#b08a30" stroke-width=".8"/><rect x="0.5" y="2.5" width="14" height="9.5" fill="url(#fg)" stroke="#b08a30" stroke-width=".8"/><path d="M1 12 H15 V3" fill="none" stroke="#5e4210" stroke-width="1.1"/><path d="M1.2 3.5 H14" stroke="#fff8d8" stroke-width=".8"/></svg>
<div class="t" style="left:332.10px;top:356.70px;font-size:11px;line-height:11px;color:#000;font-weight:normal;font-family:'Liberation Sans';transform:scaleX(0.9003);">PROCEDURE/FUNCTION</div>
<svg class="a" style="left:296.5px;top:375.5px" width="8" height="9"><path d="M1.6 1.2 L5.4 4.5 L1.6 7.8" fill="none" stroke="#6b7686" stroke-width="1.9"/></svg>
<svg class="a" style="left:312px;top:374px" width="16" height="13"><path d="M0.5 2.5 V1.5 Q0.5 0.5 1.5 0.5 H5 L6.5 2.5 Z" fill="#f2d27e" stroke="#b08a30" stroke-width=".8"/><rect x="0.5" y="2.5" width="14" height="9.5" fill="url(#fg)" stroke="#b08a30" stroke-width=".8"/><path d="M1 12 H15 V3" fill="none" stroke="#5e4210" stroke-width="1.1"/><path d="M1.2 3.5 H14" stroke="#fff8d8" stroke-width=".8"/></svg>
<div class="t" style="left:332.14px;top:374.70px;font-size:11px;line-height:11px;color:#000;font-weight:normal;font-family:'Liberation Sans';transform:scaleX(0.8442);">SELECT</div>
<svg class="a" style="left:296.5px;top:393.5px" width="8" height="9"><path d="M1.6 1.2 L5.4 4.5 L1.6 7.8" fill="none" stroke="#6b7686" stroke-width="1.9"/></svg>
<svg class="a" style="left:312px;top:392px" width="16" height="13"><path d="M0.5 2.5 V1.5 Q0.5 0.5 1.5 0.5 H5 L6.5 2.5 Z" fill="#f2d27e" stroke="#b08a30" stroke-width=".8"/><rect x="0.5" y="2.5" width="14" height="9.5" fill="url(#fg)" stroke="#b08a30" stroke-width=".8"/><path d="M1 12 H15 V3" fill="none" stroke="#5e4210" stroke-width="1.1"/><path d="M1.2 3.5 H14" stroke="#fff8d8" stroke-width=".8"/></svg>
<div class="t" style="left:332.08px;top:392.70px;font-size:11px;line-height:11px;color:#000;font-weight:normal;font-family:'Liberation Sans';transform:scaleX(0.9414);">Spacing</div>
<svg class="a" style="left:296.5px;top:411.5px" width="8" height="9"><path d="M1.6 1.2 L5.4 4.5 L1.6 7.8" fill="none" stroke="#6b7686" stroke-width="1.9"/></svg>
<svg class="a" style="left:312px;top:410px" width="16" height="13"><path d="M0.5 2.5 V1.5 Q0.5 0.5 1.5 0.5 H5 L6.5 2.5 Z" fill="#f2d27e" stroke="#b08a30" stroke-width=".8"/><rect x="0.5" y="2.5" width="14" height="9.5" fill="url(#fg)" stroke="#b08a30" stroke-width=".8"/><path d="M1 12 H15 V3" fill="none" stroke="#5e4210" stroke-width="1.1"/><path d="M1.2 3.5 H14" stroke="#fff8d8" stroke-width=".8"/></svg>
<div class="t" style="left:332.07px;top:410.70px;font-size:11px;line-height:11px;color:#000;font-weight:normal;font-family:'Liberation Sans';transform:scaleX(0.9605);">Stacked List</div>
<svg class="a" style="left:296.5px;top:429.5px" width="8" height="9"><path d="M1.6 1.2 L5.4 4.5 L1.6 7.8" fill="none" stroke="#6b7686" stroke-width="1.9"/></svg>
<svg class="a" style="left:312px;top:428px" width="16" height="13"><path d="M0.5 2.5 V1.5 Q0.5 0.5 1.5 0.5 H5 L6.5 2.5 Z" fill="#f2d27e" stroke="#b08a30" stroke-width=".8"/><rect x="0.5" y="2.5" width="14" height="9.5" fill="url(#fg)" stroke="#b08a30" stroke-width=".8"/><path d="M1 12 H15 V3" fill="none" stroke="#5e4210" stroke-width="1.1"/><path d="M1.2 3.5 H14" stroke="#fff8d8" stroke-width=".8"/></svg>
<div class="t" style="left:332.06px;top:428.70px;font-size:11px;line-height:11px;color:#000;font-weight:normal;font-family:'Liberation Sans';transform:scaleX(0.9806);">Subquery</div>
<svg class="a" style="left:296.5px;top:447.5px" width="8" height="9"><path d="M1.6 1.2 L5.4 4.5 L1.6 7.8" fill="none" stroke="#6b7686" stroke-width="1.9"/></svg>
<svg class="a" style="left:312px;top:446px" width="16" height="13"><path d="M0.5 2.5 V1.5 Q0.5 0.5 1.5 0.5 H5 L6.5 2.5 Z" fill="#f2d27e" stroke="#b08a30" stroke-width=".8"/><rect x="0.5" y="2.5" width="14" height="9.5" fill="url(#fg)" stroke="#b08a30" stroke-width=".8"/><path d="M1 12 H15 V3" fill="none" stroke="#5e4210" stroke-width="1.1"/><path d="M1.2 3.5 H14" stroke="#fff8d8" stroke-width=".8"/></svg>
<div class="t" style="left:332.04px;top:446.70px;font-size:11px;line-height:11px;color:#000;font-weight:normal;font-family:'Liberation Sans';transform:scaleX(1.0100);">Text Case</div>
<svg class="a" style="left:296.5px;top:465.5px" width="8" height="9"><path d="M1.6 1.2 L5.4 4.5 L1.6 7.8" fill="none" stroke="#6b7686" stroke-width="1.9"/></svg>
<svg class="a" style="left:312px;top:464px" width="16" height="13"><path d="M0.5 2.5 V1.5 Q0.5 0.5 1.5 0.5 H5 L6.5 2.5 Z" fill="#f2d27e" stroke="#b08a30" stroke-width=".8"/><rect x="0.5" y="2.5" width="14" height="9.5" fill="url(#fg)" stroke="#b08a30" stroke-width=".8"/><path d="M1 12 H15 V3" fill="none" stroke="#5e4210" stroke-width="1.1"/><path d="M1.2 3.5 H14" stroke="#fff8d8" stroke-width=".8"/></svg>
<div class="t" style="left:332.10px;top:464.70px;font-size:11px;line-height:11px;color:#000;font-weight:normal;font-family:'Liberation Sans';transform:scaleX(0.9123);">UNION, EXCEPT, INTERSECT</div>
<svg class="a" style="left:296.5px;top:483.5px" width="8" height="9"><path d="M1.6 1.2 L5.4 4.5 L1.6 7.8" fill="none" stroke="#6b7686" stroke-width="1.9"/></svg>
<svg class="a" style="left:312px;top:482px" width="16" height="13"><path d="M0.5 2.5 V1.5 Q0.5 0.5 1.5 0.5 H5 L6.5 2.5 Z" fill="#f2d27e" stroke="#b08a30" stroke-width=".8"/><rect x="0.5" y="2.5" width="14" height="9.5" fill="url(#fg)" stroke="#b08a30" stroke-width=".8"/><path d="M1 12 H15 V3" fill="none" stroke="#5e4210" stroke-width="1.1"/><path d="M1.2 3.5 H14" stroke="#fff8d8" stroke-width=".8"/></svg>
<div class="t" style="left:332.11px;top:482.70px;font-size:11px;line-height:11px;color:#000;font-weight:normal;font-family:'Liberation Sans';transform:scaleX(0.8967);">UPDATE</div>
<div class="a" style="left:570.5px;top:64px;width:476.5px;height:463px;overflow:hidden"><div class="a" style="left:11.5px;top:2px;font-family:'Liberation Mono';font-size:11.91px;line-height:17px;white-space:pre;color:#000"><span class="kw">SELECT</span>
        <span class="kw">CASE</span> <span class="id">ProductLine</span>
            <span class="kw">WHEN</span> <span class="st">'R'</span> <span class="kw">THEN</span> <span class="st">'Road'</span>
            <span class="kw">WHEN</span> <span class="st">'M'</span> <span class="kw">THEN</span> <span class="st">'Mountain'</span>
            <span class="kw">ELSE</span> <span class="st">'Other'</span>
        <span class="kw">END AS</span> <span class="id">Category</span><span class="gr">,</span>
        <span class="id">ProductNumber</span><span class="gr">,</span>
        <span class="id">Name</span>
<span class="kw">FROM</span> <span class="id">Production.Product</span><span class="gr">;</span>
<span class="kw">GO</span>
<span class="kw">DECLARE</span> <span class="id">@CharGender</span> <span class="kw">char</span><span class="gr">(</span>1<span class="gr">)</span> <span class="gr">=</span> <span class="st">'g'</span><span class="gr">,</span>
        <span class="id">@Gender</span> <span class="kw">varchar</span><span class="gr">(</span>20<span class="gr">);</span>
<span class="kw">SET</span> <span class="id">@Gender</span> <span class="gr">=</span>
    <span class="kw">CASE</span>
        <span class="kw">WHEN</span> <span class="id">@CharGender</span> <span class="gr">=</span> <span class="st">N'm'</span> <span class="gr">OR</span> <span class="id">@CharGender</span> <span class="gr">=</span> <span class="st">N'M'</span> <span class="kw">THEN</span> <span class="st">N'Male'</span>
        <span class="kw">WHEN</span> <span class="id">@CharGender</span> <span class="gr">=</span> <span class="st">N'f'</span> <span class="gr">OR</span> <span class="id">@CharGender</span> <span class="gr">=</span> <span class="st">N'F'</span> <span class="kw">THEN</span> <span class="st">N'Female'</span>
        <span class="kw">ELSE</span> <span class="st">'Unknown'</span>
    <span class="kw">END</span><span class="gr">;</span>
<span class="kw">GO</span></div></div>
<div class="a" style="left:1049px;top:64px;width:17.5px;height:463px;background:linear-gradient(90deg,#e6e6e6,#efefef);border-left:1px solid #dedede"></div>
<svg class="a" style="left:1053px;top:70px" width="9" height="6"><path d="M0.5 5 L4.5 1 L8.5 5z" fill="#7c7c7c"/></svg>
<div class="a" style="left:1051px;top:82.8px;width:13.5px;height:253.9px;border:1px solid #8f8f8f;border-radius:2px;background:linear-gradient(90deg,#f4f4f4,#e4e4e4 45%,#d4d4d4 55%,#cacaca)"></div>
<div class="a" style="left:1054px;top:206px;width:7px;height:7px;background:repeating-linear-gradient(#2e2e2e 0 1px,transparent 1px 3px)"></div>
<svg class="a" style="left:1053px;top:514px" width="9" height="6"><path d="M0.5 1 L4.5 5 L8.5 1z" fill="#7c7c7c"/></svg>
<div class="a" style="left:570.5px;top:527px;width:478.5px;height:18px;background:linear-gradient(#e6e6e6,#efefef);border-top:1px solid #dedede"></div>
<div class="a" style="left:570.5px;top:527px;width:60.5px;height:18px;background:#fff;border-top:1px solid #e2e2e2"></div>
<div class="t" style="left:575.13px;top:530.90px;font-size:11px;line-height:11px;color:#000;font-weight:normal;font-family:'Liberation Sans';transform:scaleX(1.0364);">100 %</div>
<svg class="a" style="left:622px;top:534px" width="6" height="4"><path d="M0 0 h6 l-3 3.5z" fill="#1b2a48"/></svg>
<svg class="a" style="left:636px;top:531px" width="6" height="9"><path d="M5 0.5 L1 4.5 L5 8.5z" fill="#8a8a8a"/></svg>
<div class="a" style="left:648.3px;top:528.3px;width:256.7px;height:13.7px;border:1px solid #8f8f8f;border-radius:2px;background:linear-gradient(#f4f4f4,#e4e4e4 45%,#d4d4d4 55%,#cacaca)"></div>
<div class="a" style="left:772px;top:531px;width:7px;height:7px;background:repeating-linear-gradient(90deg,#2e2e2e 0 1px,transparent 1px 3px)"></div>
<svg class="a" style="left:1036px;top:531px" width="6" height="9"><path d="M1 0.5 L5 4.5 L1 8.5z" fill="#8a8a8a"/></svg>
<div class="a" style="left:1049px;top:527px;width:17.5px;height:18px;background:#fff"></div>
<div class="btn" style="left:292.4px;top:559.5px;width:73.6px;height:22px;"></div>
<div class="t" style="left:317.37px;top:565.46px;font-size:11.5px;line-height:11.5px;color:#1e1e1e;transform:scaleX(0.9331);transform-origin:50% 0">Help</div>
<div class="btn" style="left:906.6px;top:559.6px;width:73.6px;height:21.9px;"></div>
<div class="t" style="left:935.09px;top:565.51px;font-size:11.5px;line-height:11.5px;color:#1e1e1e;transform:scaleX(0.9047);transform-origin:50% 0">OK</div>
<div class="btn" style="left:986.3px;top:559.6px;width:74px;height:21.9px;"></div>
<div class="t" style="left:1005.39px;top:565.51px;font-size:11.5px;line-height:11.5px;color:#1e1e1e;transform:scaleX(0.9232);transform-origin:50% 0">Cancel</div>
</body></html>
